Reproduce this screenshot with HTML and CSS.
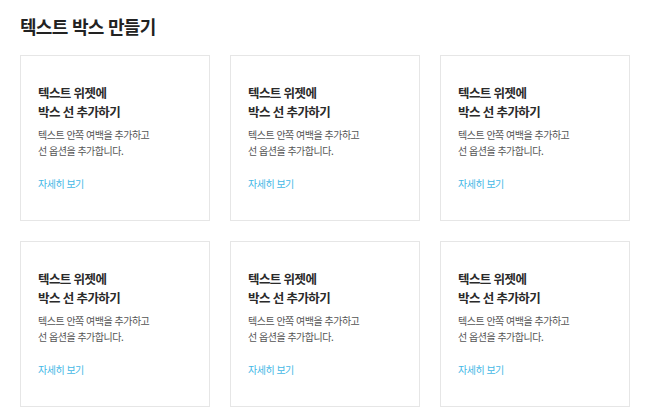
FILE: index.html
```html
<!DOCTYPE html>
<html lang="ko">
  <head>
    <meta charset="UTF-8" />
    <meta name="viewport" content="width=device-width, initial-scale=1.0" />
    <title>텍스트 박스 만들기</title>
    <link rel="stylesheet" href="styles.css">
  </head>
  <body>
    <div class="page">
      <h1>텍스트 박스 만들기</h1>

      <div class="box-grid">
        <div class="box">
          <h3>텍스트 위젯에<br />박스 선 추가하기</h3>
          <p>텍스트 안쪽 여백을 추가하고<br />선 옵션을 추가합니다.</p>
          <a href="#" class="more">자세히 보기</a>
        </div>
        <div class="box">
          <h3>텍스트 위젯에<br />박스 선 추가하기</h3>
          <p>텍스트 안쪽 여백을 추가하고<br />선 옵션을 추가합니다.</p>
          <a href="#" class="more">자세히 보기</a>
        </div>
        <div class="box">
          <h3>텍스트 위젯에<br />박스 선 추가하기</h3>
          <p>텍스트 안쪽 여백을 추가하고<br />선 옵션을 추가합니다.</p>
          <a href="#" class="more">자세히 보기</a>
        </div>
        <div class="box">
          <h3>텍스트 위젯에<br />박스 선 추가하기</h3>
          <p>텍스트 안쪽 여백을 추가하고<br />선 옵션을 추가합니다.</p>
          <a href="#" class="more">자세히 보기</a>
        </div>
        <div class="box">
          <h3>텍스트 위젯에<br />박스 선 추가하기</h3>
          <p>텍스트 안쪽 여백을 추가하고<br />선 옵션을 추가합니다.</p>
          <a href="#" class="more">자세히 보기</a>
        </div>
        <div class="box">
          <h3>텍스트 위젯에<br />박스 선 추가하기</h3>
          <p>텍스트 안쪽 여백을 추가하고<br />선 옵션을 추가합니다.</p>
          <a href="#" class="more">자세히 보기</a>
        </div>
      </div>
    </div>
  </body>
</html>
```

FILE: styles.css
```css
body {
  margin: 0;
  font-family: "Noto Sans CJK KR", "Noto Sans", sans-serif;
  color: #222;
  background: #fff;
}
.page {
  padding: 15px 20px 20px;
}
h1 {
  margin: 0 0 18px;
  font-size: 18px;
  line-height: 22px;
  font-weight: 700;
  letter-spacing: -0.7px;
  color: #222;
}
.box-grid {
  display: grid;
  grid-template-columns: repeat(3, 190px);
  column-gap: 20px;
  row-gap: 20px;
}
.box {
  box-sizing: border-box;
  height: 166px;
  border: 1px solid #e6e6e6;
  padding: 27px 17px 0;
}
.box h3 {
  margin: 0 0 6px;
  font-size: 12.5px;
  line-height: 19px;
  font-weight: 700;
  letter-spacing: -0.6px;
  color: #2a2a2a;
}
.box p {
  margin: 0 0 17px;
  font-size: 10px;
  line-height: 16px;
  letter-spacing: -0.5px;
  color: #555;
}
.more {
  display: block;
  font-size: 10px;
  line-height: 16px;
  letter-spacing: -0.5px;
  color: #45b8e6;
  text-decoration: none;
}
```
